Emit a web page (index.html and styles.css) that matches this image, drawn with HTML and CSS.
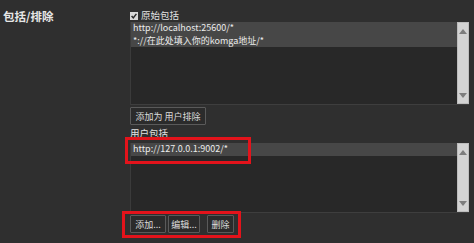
FILE: index.html
```html
<!DOCTYPE html>
<html>
<head>
<meta charset="utf-8">
<link rel="stylesheet" href="styles.css">
</head>
<body>
<div class="page">
  <div class="label">包括/排除</div>
  <div class="content">
    <label class="check-row"><span class="checkbox"><svg width="8" height="8" viewBox="0 0 8 8"><path d="M1.6 4 L3.3 5.9 L6.4 1.9" fill="none" stroke="#2a2a2a" stroke-width="1.5"/></svg></span>原始包括</label>
    <div class="listbox lb1">
      <div class="items">
        <div class="item sel">http://localhost:25600/*</div>
        <div class="item sel">*://在此处填入你的komga地址/*</div>
      </div>
      <div class="scrollbar"><span class="arrow up"></span><span class="arrow down"></span></div>
    </div>
    <button class="btn btn-wide">添加为 用户排除</button>
    <div class="sublabel">用户包括</div>
    <div class="listbox lb2">
      <div class="items">
        <div class="item sel">http://127.0.0.1:9002/*</div>
      </div>
      <div class="scrollbar"><span class="arrow up"></span><span class="arrow down"></span></div>
    </div>
    <div class="btn-row">
      <button class="btn btn-add">添加...</button>
      <button class="btn btn-edit">编辑...</button>
      <button class="btn btn-del">删除</button>
    </div>
  </div>
</div>
<div class="mark mark1"></div>
<div class="mark mark2"></div>
</body>
</html>
```
FILE: styles.css
```css
html, body {
  margin: 0;
  padding: 0;
  background: #2f2f2f;
  width: 474px;
  height: 243px;
  overflow: hidden;
  font-family: "Noto Sans CJK SC", "Noto Sans", sans-serif;
  color: #e2e2e2;
}
.page {
  display: grid;
  grid-template-columns: 130px 339px;
}
.label {
  padding: 8px 0 0 3px;
  font-size: 11.5px;
  font-weight: 700;
  line-height: 17px;
  color: #e6e6e6;
}
.content {
  display: flex;
  flex-direction: column;
  align-items: flex-start;
  padding-top: 9px;
}
.check-row {
  display: flex;
  align-items: center;
  gap: 3px;
  font-size: 9.5px;
  line-height: 13px;
  height: 13px;
}
.checkbox {
  width: 8px;
  height: 8px;
  background: #d8d8d8;
  display: inline-flex;
}
.listbox {
  display: flex;
  width: 339px;
  background: #282828;
  border-left: 1px solid #3b3b3b;
  border-bottom: 1px solid #3e3e3e;
  box-sizing: border-box;
}
.lb1 { height: 83px; }
.lb2 { height: 70px; }
.items {
  flex: 1;
  display: flex;
  flex-direction: column;
}
.item {
  height: 12.5px;
  line-height: 12.5px;
  font-size: 9px;
  padding-left: 2px;
  color: #ececec;
  white-space: nowrap;
}
.item.sel { background: #474747; }
.scrollbar {
  width: 12px;
  background: #d3d3d3;
  border: 1px solid #bdbdbd;
  box-sizing: border-box;
  display: flex;
  flex-direction: column;
  justify-content: space-between;
  align-items: center;
  padding: 6px 0 5px;
}
.arrow {
  width: 0;
  height: 0;
  border-left: 4px solid transparent;
  border-right: 4px solid transparent;
}
.arrow.up { border-bottom: 5px solid #7d7d7d; }
.arrow.down { border-top: 5px solid #7d7d7d; }
.btn {
  font-family: inherit;
  font-size: 9px;
  line-height: 15px;
  height: 18px;
  padding: 0;
  background: #2b2b2b;
  color: #dcdcdc;
  border: 1px solid #5a5a5a;
  border-radius: 1px;
  margin: 0;
  text-align: center;
  white-space: nowrap;
}
.btn-wide { margin-top: 2px; width: 76px; }
.btn-add { width: 36px; }
.btn-edit { width: 32px; }
.btn-del { width: 27px; margin-left: 5px; }
.sublabel {
  font-size: 9.5px;
  line-height: 13px;
  margin-top: 2px;
  margin-bottom: 3px;
}
.btn-row {
  display: flex;
  gap: 2px;
  margin-top: 2px;
}
.mark {
  position: absolute;
  border: 3px solid #e3131b;
  box-sizing: border-box;
}
.mark1 { left: 125px; top: 137px; width: 126px; height: 27px; }
.mark2 { left: 122px; top: 211px; width: 119px; height: 27px; }
```
